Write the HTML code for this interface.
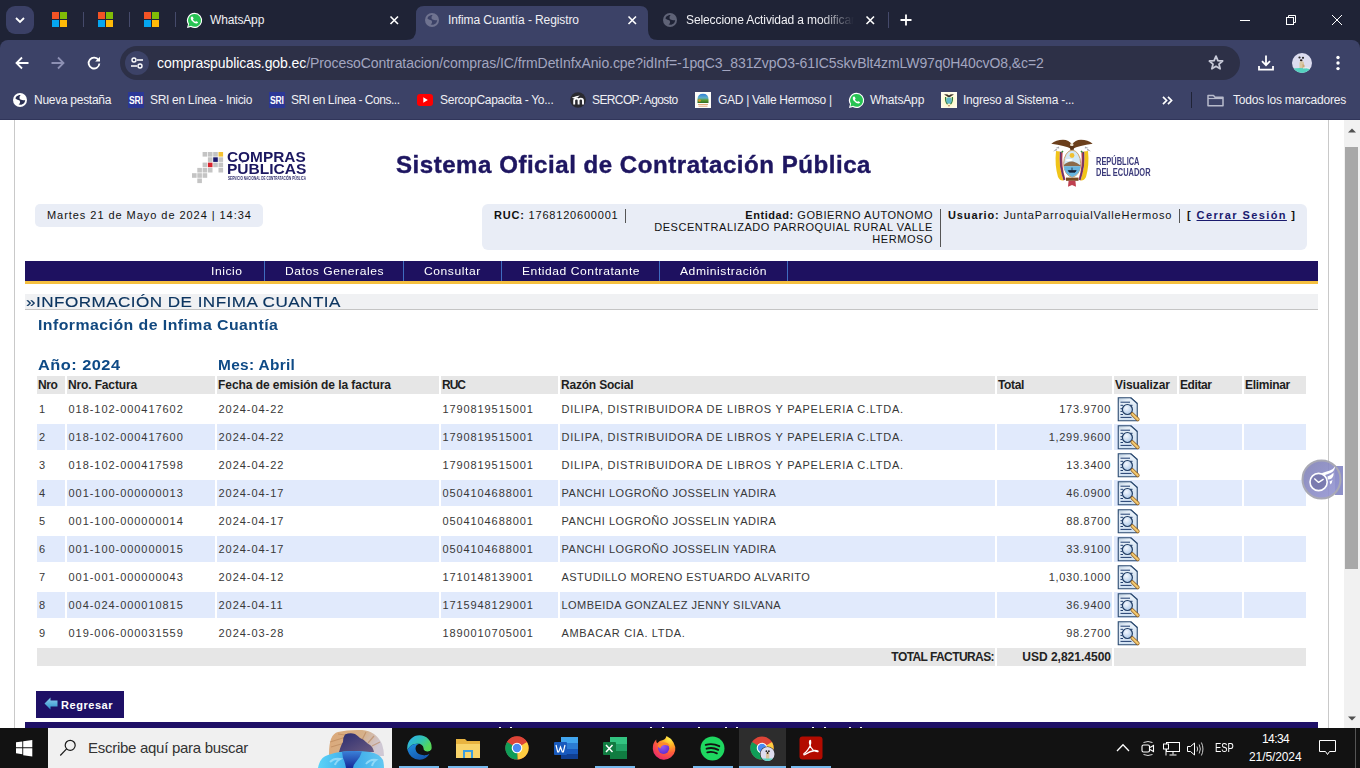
<!DOCTYPE html>
<html><head><meta charset="utf-8">
<style>
*{box-sizing:border-box;margin:0;padding:0}
html,body{width:1360px;height:768px;overflow:hidden;background:#fff;font-family:"Liberation Sans",sans-serif;position:relative}
.a{position:absolute}
.t{position:absolute;white-space:pre;line-height:1}
svg{position:absolute;overflow:visible}
.ctext{font-size:12px;color:#f0f0f4}
.mn{top:265.6px;font-size:11px;color:#fff;letter-spacing:0.5px;transform:scaleX(1.1);transform-origin:0 0}
.th{top:379.4px;font-size:12px;font-weight:bold;color:#1e1e1e}
.td{font-size:11px;color:#383838}
</style></head>
<body>
<svg width="0" height="0" style="position:absolute;left:0;top:0">
<defs>
<linearGradient id="docg" x1="0" y1="0" x2="0.4" y2="1"><stop offset="0" stop-color="#b7cadc"/><stop offset="0.25" stop-color="#e6eff8"/><stop offset="1" stop-color="#d2e2f2"/></linearGradient>
<radialGradient id="lens" cx="0.4" cy="0.35" r="0.7"><stop offset="0" stop-color="#f4f8ff"/><stop offset="1" stop-color="#a9c6e6"/></radialGradient>
<g id="ico">
<path d="M1.25 0.75H13.75L20.25 6.5V23.75H1.25Z" fill="url(#docg)" stroke="#2b4a70" stroke-width="1.1"/>
<path d="M13.75 0.75L20.25 6.5H14.5Z" fill="#e8f1fa"/>
<path d="M13.75 0.75L20.25 6.5" stroke="#2b4a70" stroke-width="1.1"/>
<path d="M3.5 5.2H13M3.5 8.3H6M13 8.3H15.5M3.5 11.7H5.2M3.5 14.4H5.2M3.5 17.5H6M3.5 20.4H14.5" stroke="#1f3c6e" stroke-width="1"/>
<circle cx="10.4" cy="12.5" r="5" fill="url(#lens)" stroke="#233f66" stroke-width="1.2"/>
<path d="M15.3 17L20.8 22.4" stroke="#8a5a20" stroke-width="3.6" stroke-linecap="round"/>
<path d="M15.3 17L20.8 22.4" stroke="#f2c870" stroke-width="2.2" stroke-linecap="round"/>
</g>
</defs>
</svg>
<!-- ===== TAB STRIP ===== -->
<div class="a" style="left:0;top:0;width:1360px;height:52px;background:#1f2336"></div>
<div class="a" style="left:6px;top:6px;width:28px;height:28px;border-radius:9px;background:#3b4066"></div>
<svg style="left:0;top:0" width="40" height="40"><path d="M16 18 L20 22 L24 18" stroke="#fff" stroke-width="1.8" fill="none"/></svg>
<!-- ms logos -->
<svg style="left:52px;top:12px" width="16" height="16"><rect x="0" y="0" width="7" height="7" fill="#f35325"/><rect x="8" y="0" width="7" height="7" fill="#81bc06"/><rect x="0" y="8" width="7" height="7" fill="#05a6f0"/><rect x="8" y="8" width="7" height="7" fill="#ffba08"/></svg>
<svg style="left:98px;top:12px" width="16" height="16"><rect x="0" y="0" width="7" height="7" fill="#f35325"/><rect x="8" y="0" width="7" height="7" fill="#81bc06"/><rect x="0" y="8" width="7" height="7" fill="#05a6f0"/><rect x="8" y="8" width="7" height="7" fill="#ffba08"/></svg>
<svg style="left:144px;top:12px" width="16" height="16"><rect x="0" y="0" width="7" height="7" fill="#f35325"/><rect x="8" y="0" width="7" height="7" fill="#81bc06"/><rect x="0" y="8" width="7" height="7" fill="#05a6f0"/><rect x="8" y="8" width="7" height="7" fill="#ffba08"/></svg>
<div class="a" style="left:83px;top:12px;width:1px;height:15px;background:#454a6b"></div>
<div class="a" style="left:129px;top:12px;width:1px;height:15px;background:#454a6b"></div>
<div class="a" style="left:175px;top:12px;width:1px;height:15px;background:#454a6b"></div>
<!-- whatsapp tab -->
<svg style="left:186px;top:12px" width="17" height="17" viewBox="0 0 17 17"><path d="M8.5 0.8a7.6 7.6 0 0 0-6.5 11.5L1 16l3.8-1a7.6 7.6 0 1 0 3.7-14.2z" fill="#fff"/><path d="M8.5 2a6.4 6.4 0 0 0-5.4 9.8l-0.7 2.6 2.7-0.7A6.4 6.4 0 1 0 8.5 2z" fill="#27c353"/><path d="M5.7 4.5Q6.3 4.2 6.7 4.7L7.5 6.2Q7.7 6.7 7.3 7L6.9 7.4Q7.7 9 9.3 9.8L9.7 9.4Q10 9.1 10.4 9.3L11.8 10Q12.2 10.3 11.9 10.8Q11.3 11.7 10.3 11.6Q7.6 11.2 5.5 8.6Q4.5 7.1 4.8 5.6Q5 5 5.7 4.5Z" fill="#fff"/></svg>
<div class="t ctext" style="left:210px;top:14px;letter-spacing:-0.15px">WhatsApp</div>
<svg style="left:390px;top:16px" width="9" height="9"><path d="M0.5 0.5L8 8M8 0.5L0.5 8" stroke="#fff" stroke-width="1.6"/></svg>
<!-- active tab -->
<svg style="left:406px;top:6px" width="252" height="34" viewBox="0 0 252 34"><path d="M0 34 Q10 34 10 24 L10 8 Q10 0 18 0 L234 0 Q242 0 242 8 L242 24 Q242 34 252 34 Z" fill="#3c4267"/></svg>
<svg style="left:425px;top:13px" width="14" height="14" viewBox="0 0 14 14"><circle cx="7" cy="7" r="7" fill="#6f7390"/><path d="M2.3 5.2Q3 2.6 6.2 1.9L7.6 2.1Q6.2 3.4 6.5 5.2Q6.9 6.4 8.1 6.9L6 7.3Q3.6 6.9 2.3 5.2Z" fill="#3c4267"/><path d="M6.2 7.1L8.2 6.8Q10.6 7.4 12.2 7.3Q11.8 10.8 8.3 11.8L5.6 11.4Q7.3 10.3 7.1 9Q6.9 7.9 6.2 7.1Z" fill="#3c4267"/></svg>
<div class="t ctext" style="left:448px;top:14px;letter-spacing:-0.1px">Infima Cuantía - Registro</div>
<svg style="left:628px;top:16px" width="9" height="9"><path d="M0.5 0.5L8 8M8 0.5L0.5 8" stroke="#fff" stroke-width="1.6"/></svg>
<!-- third tab -->
<svg style="left:663px;top:13px" width="14" height="14" viewBox="0 0 14 14"><circle cx="7" cy="7" r="7" fill="#5f6377"/><path d="M2.3 5.2Q3 2.6 6.2 1.9L7.6 2.1Q6.2 3.4 6.5 5.2Q6.9 6.4 8.1 6.9L6 7.3Q3.6 6.9 2.3 5.2Z" fill="#1f2336"/><path d="M6.2 7.1L8.2 6.8Q10.6 7.4 12.2 7.3Q11.8 10.8 8.3 11.8L5.6 11.4Q7.3 10.3 7.1 9Q6.9 7.9 6.2 7.1Z" fill="#1f2336"/></svg>
<div class="t ctext" style="left:686px;top:14px;letter-spacing:-0.1px;width:168px;overflow:hidden;-webkit-mask-image:linear-gradient(90deg,#000 80%,transparent 100%)">Seleccione Actividad a modificar</div>
<svg style="left:866px;top:16px" width="9" height="9"><path d="M0.5 0.5L8 8M8 0.5L0.5 8" stroke="#fff" stroke-width="1.6"/></svg>
<div class="a" style="left:888px;top:12px;width:1px;height:16px;background:#454a6b"></div>
<svg style="left:900px;top:14px" width="12" height="12"><path d="M6 0.5V11.5M0.5 6H11.5" stroke="#fff" stroke-width="1.8"/></svg>
<!-- window controls -->
<div class="a" style="left:1240px;top:20px;width:10px;height:1px;background:#fff"></div>
<svg style="left:1285px;top:14px" width="12" height="12"><rect x="1.5" y="3.5" width="7" height="7" stroke="#fff" fill="#1f2336" stroke-width="1"/><path d="M3.5 3.5V1.5H10.5V8.5H8.5" stroke="#fff" fill="none" stroke-width="1"/></svg>
<svg style="left:1331px;top:14px" width="12" height="12"><path d="M1 1L11 11M11 1L1 11" stroke="#fff" stroke-width="1"/></svg>

<!-- ===== TOOLBAR ===== -->
<div class="a" style="left:0;top:40px;width:1360px;height:80px;background:#3c4267;border-radius:8px 8px 0 0"></div>
<div class="a" style="left:0;top:119px;width:1360px;height:1px;background:#30355a"></div>
<svg style="left:15px;top:56px" width="14" height="14"><path d="M13.5 7H2M7 1.5L1.5 7L7 12.5" stroke="#fff" stroke-width="1.8" fill="none"/></svg>
<svg style="left:51px;top:56px" width="14" height="14"><path d="M0.5 7H12M7 1.5L12.5 7L7 12.5" stroke="#8d90b3" stroke-width="1.8" fill="none"/></svg>
<svg style="left:87px;top:56px" width="14" height="14"><path d="M11.6 4.2A5.4 5.4 0 1 0 12.4 7.5" stroke="#fff" stroke-width="1.8" fill="none"/><path d="M13 0.8V5.6H8.2Z" fill="#fff"/></svg>
<!-- omnibox -->
<div class="a" style="left:120px;top:46px;width:1120px;height:34px;border-radius:17px;background:#2d3047"></div>
<div class="a" style="left:125px;top:51px;width:24px;height:24px;border-radius:12px;background:#3c4267"></div>
<svg style="left:130px;top:56px" width="14" height="14"><circle cx="4" cy="4" r="2" stroke="#fff" stroke-width="1.4" fill="none"/><path d="M7 4H13M1 10H7" stroke="#fff" stroke-width="1.5"/><circle cx="10" cy="10" r="2" stroke="#fff" stroke-width="1.4" fill="none"/></svg>
<div class="t" style="left:157px;top:56px;font-size:14px;color:#fff;letter-spacing:-0.08px">compraspublicas.gob.ec<span style="color:#a3a6c0">/ProcesoContratacion/compras/IC/frmDetInfxAnio.cpe?idInf=-1pqC3_831ZvpO3-61IC5skvBlt4zmLW97q0H40cvO8,&amp;c=2</span></div>
<svg style="left:1208px;top:55px" width="16" height="16" viewBox="0 0 16 16"><path d="M8 1.2L9.9 5.6L14.6 6L11 9.1L12.1 13.8L8 11.3L3.9 13.8L5 9.1L1.4 6L6.1 5.6Z" stroke="#c7c9d8" stroke-width="1.8" fill="none" stroke-linejoin="round"/></svg>
<svg style="left:1258px;top:55px" width="16" height="16" viewBox="0 0 16 16"><path d="M8 0.5V10M4 6.2L8 10.2L12 6.2" stroke="#fff" stroke-width="1.8" fill="none"/><path d="M1 11V14.6H15V11" stroke="#fff" stroke-width="1.8" fill="none"/></svg>
<svg style="left:1292px;top:53px" width="20" height="20" viewBox="0 0 20 20"><defs><clipPath id="pc"><circle cx="10" cy="10" r="10"/></clipPath></defs><g clip-path="url(#pc)"><rect width="20" height="20" fill="#dcdcef"/><path d="M7.5 16V10Q7.5 8.5 8.8 8.2H10.6Q12 8.5 12 10V16Z" fill="#d8c7a4"/><path d="M10.5 11V16H12.5V12Z" fill="#c9a878"/><circle cx="7.5" cy="4.5" r="1.1" fill="#2a2a2a"/><circle cx="11" cy="4.8" r="1.1" fill="#2a2a2a"/><ellipse cx="9.2" cy="7.3" rx="1.3" ry="1" fill="#2a2018"/><path d="M0 15.5Q10 14.5 20 16V20H0Z" fill="#55d2c0"/><path d="M11 15Q15 14 18 15.5" stroke="#e8f0f0" stroke-width="1" fill="none"/></g></svg>
<svg style="left:1336px;top:55px" width="4" height="16"><circle cx="2" cy="2.5" r="1.7" fill="#fff"/><circle cx="2" cy="8" r="1.7" fill="#fff"/><circle cx="2" cy="13.6" r="1.7" fill="#fff"/></svg>
<!-- ===== BOOKMARKS ===== -->
<svg style="left:13px;top:93px" width="14" height="14" viewBox="0 0 14 14"><circle cx="7" cy="7" r="7" fill="#fff"/><path d="M2.3 5.2Q3 2.6 6.2 1.9L7.6 2.1Q6.2 3.4 6.5 5.2Q6.9 6.4 8.1 6.9L6 7.3Q3.6 6.9 2.3 5.2Z" fill="#2a2f52"/><path d="M6.2 7.1L8.2 6.8Q10.6 7.4 12.2 7.3Q11.8 10.8 8.3 11.8L5.6 11.4Q7.3 10.3 7.1 9Q6.9 7.9 6.2 7.1Z" fill="#2a2f52"/></svg>
<div class="t ctext" style="left:34px;top:94px;letter-spacing:-0.28px">Nueva pestaña</div>
<svg style="left:128px;top:92px" width="16" height="16"><rect width="16" height="16" fill="#2b3796"/><g transform="translate(1,11.6) scale(0.78,1)"><text x="0" y="0" font-family="Liberation Sans" font-weight="bold" font-size="11" fill="#fff" letter-spacing="-0.3">SRI</text></g></svg>
<div class="t ctext" style="left:150px;top:94px;letter-spacing:-0.32px">SRI en Línea - Inicio</div>
<svg style="left:269px;top:92px" width="16" height="16"><rect width="16" height="16" fill="#2b3796"/><g transform="translate(1,11.6) scale(0.78,1)"><text x="0" y="0" font-family="Liberation Sans" font-weight="bold" font-size="11" fill="#fff" letter-spacing="-0.3">SRI</text></g></svg>
<div class="t ctext" style="left:291px;top:94px;letter-spacing:-0.46px">SRI en Línea - Cons...</div>
<svg style="left:417px;top:93px" width="16" height="14"><rect x="0" y="1" width="16" height="12" rx="3" fill="#f00"/><path d="M6.3 4.3V9.7L10.8 7Z" fill="#fff"/></svg>
<div class="t ctext" style="left:440px;top:94px;letter-spacing:-0.27px">SercopCapacita - Yo...</div>
<svg style="left:570px;top:92px" width="16" height="16"><circle cx="8" cy="8" r="7.8" fill="#2a2a30"/><path d="M4.2 12.5V8.6Q4.2 6.6 6.6 6.6Q8.6 6.6 8.6 8.6V12.5M8.6 8.6Q8.6 6.6 10.8 6.6Q13 6.6 13 8.6V12.5" stroke="#fff" stroke-width="1.9" fill="none"/><path d="M1.8 5.8L6 4.2L9.8 3.4L7.6 5.4L4 6.6Z" fill="#fff"/></svg>
<div class="t ctext" style="left:592px;top:94px;letter-spacing:-0.61px">SERCOP: Agosto</div>
<svg style="left:695px;top:92px" width="16" height="16" viewBox="0 0 16 16"><defs><linearGradient id="gd" x1="0" y1="0" x2="0" y2="1"><stop offset="0" stop-color="#2f7fd8"/><stop offset="0.45" stop-color="#5fb0c8"/><stop offset="0.7" stop-color="#5a9a30"/><stop offset="1" stop-color="#2f6a20"/></linearGradient></defs><rect width="16" height="16" fill="#fdfcf8"/><path d="M2.5 11V7.5Q2.5 1.8 8 1.8Q13.5 1.8 13.5 7.5V11Z" fill="url(#gd)"/><circle cx="4.5" cy="8.5" r="1.3" fill="#e0902a"/><path d="M3 12.5H13M3.5 14.2H12.5" stroke="#e0a070" stroke-width="0.9"/></svg>
<div class="t ctext" style="left:718px;top:94px;letter-spacing:-0.3px">GAD | Valle Hermoso |</div>
<svg style="left:848px;top:92px" width="17" height="17" viewBox="0 0 17 17"><path d="M8.5 0.8a7.6 7.6 0 0 0-6.5 11.5L1 16l3.8-1a7.6 7.6 0 1 0 3.7-14.2z" fill="#fff"/><path d="M8.5 2a6.4 6.4 0 0 0-5.4 9.8l-0.7 2.6 2.7-0.7A6.4 6.4 0 1 0 8.5 2z" fill="#27c353"/><path d="M5.7 4.5Q6.3 4.2 6.7 4.7L7.5 6.2Q7.7 6.7 7.3 7L6.9 7.4Q7.7 9 9.3 9.8L9.7 9.4Q10 9.1 10.4 9.3L11.8 10Q12.2 10.3 11.9 10.8Q11.3 11.7 10.3 11.6Q7.6 11.2 5.5 8.6Q4.5 7.1 4.8 5.6Q5 5 5.7 4.5Z" fill="#fff"/></svg>
<div class="t ctext" style="left:870px;top:94px;letter-spacing:-0.15px">WhatsApp</div>
<svg style="left:941px;top:92px" width="16" height="16" viewBox="0 0 16 16"><defs><radialGradient id="ig" cx="0.5" cy="0.55" r="0.6"><stop offset="0" stop-color="#fff6b0"/><stop offset="1" stop-color="#fffdf0"/></radialGradient></defs><rect width="16" height="16" fill="url(#ig)"/><path d="M3 2.5Q6 1.5 8 3.5Q10 1.5 13 2.5Q10.5 3.5 9 5H7Q5.5 3.5 3 2.5Z" fill="#3a3028"/><path d="M4 5Q3.5 10 6 12.5L7 12Q5 9.5 5.2 5Z M12 5Q12.5 10 10 12.5L9 12Q11 9.5 10.8 5Z" fill="#2f7a3a"/><ellipse cx="8" cy="8.5" rx="2.7" ry="3.2" fill="#60b8c8"/><path d="M6.5 12.5Q8 14.5 9.5 12.5L8 14.8Z" fill="#8a4a2a"/></svg>
<div class="t ctext" style="left:963px;top:94px;letter-spacing:-0.24px">Ingreso al Sistema -...</div>
<svg style="left:1162px;top:96px" width="12" height="9"><path d="M1 0.8L4.6 4.5L1 8.2M6 0.8L9.6 4.5L6 8.2" stroke="#fff" stroke-width="1.7" fill="none"/></svg>
<div class="a" style="left:1191px;top:92px;width:1px;height:16px;background:#1f2336"></div>
<svg style="left:1207px;top:94px" width="18" height="13"><path d="M1 1.5H6.5L8 3.2H16V11.8H1Z" stroke="#b7bacb" stroke-width="1.5" fill="none" stroke-linejoin="round"/><path d="M1 4.5H16" stroke="#b7bacb" stroke-width="1.2"/></svg>
<div class="t ctext" style="left:1233px;top:94px;letter-spacing:-0.22px">Todos los marcadores</div>
<!-- ===== PAGE ===== -->
<div class="a" style="left:0;top:120px;width:1344px;height:608px;background:#fff"></div>
<div class="a" style="left:14px;top:120px;width:1px;height:608px;background:#c9c9c9"></div>
<div class="a" style="left:1328px;top:120px;width:1px;height:608px;background:#c9c9c9"></div>
<!-- scrollbar -->
<div class="a" style="left:1344px;top:120px;width:16px;height:608px;background:#f1f1f1"></div>
<svg style="left:1344px;top:124px" width="16" height="12"><path d="M4 8.5L8 4.5L12 8.5Z" fill="#505050"/></svg>
<svg style="left:1344px;top:713px" width="16" height="12"><path d="M4 3.5L8 7.5L12 3.5Z" fill="#505050"/></svg>
<div class="a" style="left:1345px;top:147px;width:13px;height:422px;background:#a8a8a8"></div>

<!-- compras publicas logo -->
<svg style="left:191px;top:151px" width="40" height="34" viewBox="0 0 40 34">
<g fill="#c4c4c4">
<rect x="11.6" y="1" width="4.6" height="4.6"/><rect x="16.9" y="1" width="4.6" height="4.6"/><rect x="22.2" y="1" width="4.6" height="4.6"/>
<rect x="16.9" y="6.3" width="4.6" height="4.6"/><rect x="27.5" y="6.3" width="4.6" height="4.6"/>
<rect x="11.6" y="11.6" width="4.6" height="4.6"/><rect x="22.2" y="11.6" width="4.6" height="4.6"/><rect x="27.5" y="11.6" width="4.6" height="4.6"/>
<rect x="6.3" y="16.9" width="4.6" height="4.6"/><rect x="11.6" y="16.9" width="4.6" height="4.6"/><rect x="16.9" y="16.9" width="4.6" height="4.6"/><rect x="27.5" y="16.9" width="4.6" height="4.6"/>
<rect x="1" y="22.2" width="4.6" height="4.6"/><rect x="6.3" y="22.2" width="4.6" height="4.6"/><rect x="11.6" y="22.2" width="4.6" height="4.6"/>
<rect x="6.3" y="27.5" width="4.6" height="4.6"/>
</g>
<rect x="27.5" y="1" width="4.6" height="4.6" fill="#f5c232"/>
<rect x="22.2" y="6.3" width="4.6" height="4.6" fill="#1b1a6e"/>
<rect x="16.9" y="11.6" width="4.6" height="4.6" fill="#d7242e"/>
</svg>
<div class="t" style="left:227px;top:149.5px;font-size:14px;font-weight:bold;color:#1b1760;transform:scaleX(1.1);transform-origin:0 0">COMPRAS</div>
<div class="t" style="left:227px;top:162px;font-size:14px;font-weight:bold;color:#1b1760;transform:scaleX(1.11);transform-origin:0 0">PÚBLICAS</div>
<div class="t" style="left:228px;top:176.6px;font-size:4.6px;font-weight:bold;color:#2d2b6a;transform:scaleX(0.67);transform-origin:0 0;letter-spacing:0.05px">SERVICIO NACIONAL DE CONTRATACIÓN PÚBLICA</div>

<!-- title -->
<div class="t" style="left:396px;top:154px;font-size:23px;font-weight:bold;color:#1e1661;-webkit-text-stroke:0.4px #1e1661;letter-spacing:0.5px;transform:scaleX(1.046);transform-origin:0 0">Sistema Oficial de Contratación Pública</div>

<!-- ecuador logo -->
<svg style="left:1046px;top:134px" width="52" height="56" viewBox="0 0 52 56">
<path d="M5.3 9.8Q10 5.8 17 5.8Q23 6 26 10.5L25.5 15Q19 11.5 5.3 9.8Z" fill="#6b3f1c"/>
<path d="M46.7 9.8Q42 5.8 35 5.8Q29 6 26 10.5L26.5 15Q33 11.5 46.7 9.8Z" fill="#6b3f1c"/>
<circle cx="25.8" cy="10.8" r="1.7" fill="#e8e0d0"/>
<path d="M23.8 12L28.2 12L27.5 17L24.5 17Z" fill="#5a3418"/>
<path d="M7 17.5L10.5 14.5L11.2 16.2Z M9.5 14L13 12.5L13.2 14.5Z M45 17.5L41.5 14.5L40.8 16.2Z M42.5 14L39 12.5L38.8 14.5Z" fill="#a8a8b0"/>
<path d="M10 17Q8.5 31 12 43Q14 47 17.5 46.5Q12.5 33 13.8 17.5Z" fill="#f0c419"/>
<path d="M42 17Q43.5 31 40 43Q38 47 34.5 46.5Q39.5 33 38.2 17.5Z" fill="#f0c419"/>
<path d="M13.8 17.5Q12.5 33 17.5 46.5L19.5 45.5Q15.2 32.5 16.6 18.5Z" fill="#b83848"/>
<path d="M38.2 17.5Q39.5 33 34.5 46.5L32.5 45.5Q36.8 32.5 35.4 18.5Z" fill="#b83848"/>
<path d="M14.6 18Q13.6 32 18.2 46" stroke="#2a3a8a" stroke-width="0.8" fill="none"/>
<path d="M37.4 18Q38.4 32 33.8 46" stroke="#2a3a8a" stroke-width="0.8" fill="none"/>
<path d="M15.5 18.5L17 17M36.5 18.5L35 17" stroke="#3a8a3a" stroke-width="1.5"/>
<ellipse cx="26.2" cy="29.6" rx="8.5" ry="13.4" fill="#d2e8f6" stroke="#c9a06b" stroke-width="1"/>
<circle cx="26" cy="21.5" r="2.4" fill="#f0c030"/>
<ellipse cx="23" cy="26" rx="3.5" ry="1.1" fill="#fff"/>
<path d="M17.9 31Q22 26.8 27 27.6Q31 28.5 34.6 31.5V32.2H17.9Z" fill="#8b6a4a"/>
<path d="M17.9 32.2H34.6Q34 40 26.2 43Q18.4 40 17.9 32.2Z" fill="#68b4de"/>
<path d="M22.2 36.6H30.2L29 38.2H23.4Z M26 33.6V36.6" fill="#1a2438" stroke="#1a2438" stroke-width="0.8"/>
<rect x="20" y="43.6" width="12.5" height="3.2" fill="#7a4a20"/>
<path d="M22.6 46.8L22 52.8L26 51L30 52.8L29.4 46.8Z" fill="#c04050"/>
</svg>
<div class="t" style="left:1096px;top:156px;font-size:10.5px;font-weight:bold;color:#3c3b7b;transform:scaleX(0.71);transform-origin:0 0;letter-spacing:0px">REPÚBLICA</div>
<div class="t" style="left:1096px;top:166.7px;font-size:10.5px;font-weight:bold;color:#3c3b7b;transform:scaleX(0.71);transform-origin:0 0">DEL ECUADOR</div>

<!-- date box -->
<div class="a" style="left:35px;top:204px;width:228px;height:23px;border-radius:5px;background:#e9edf6"></div>
<div class="t" style="left:47px;top:210px;font-size:11px;color:#111;letter-spacing:0.95px">Martes 21 de Mayo de 2024 | 14:34</div>

<!-- ruc box -->
<div class="a" style="left:482px;top:204px;width:825px;height:46px;border-radius:6px;background:#e9edf6"></div>
<div class="t" style="left:494px;top:210px;font-size:11px;color:#111;letter-spacing:0.8px"><b>RUC:</b> 1768120600001</div>
<div class="a" style="left:625px;top:209px;width:1px;height:14px;background:#555"></div>
<div class="t" style="left:601px;width:332px;top:209px;font-size:11px;color:#111;letter-spacing:0.55px;text-align:right;line-height:12px;white-space:normal"><b>Entidad:</b> GOBIERNO AUTONOMO<br>DESCENTRALIZADO PARROQUIAL RURAL VALLE<br>HERMOSO</div>
<div class="a" style="left:940px;top:209px;width:1px;height:38px;background:#555"></div>
<div class="t" style="left:948px;top:210px;font-size:11px;color:#111;letter-spacing:0.87px"><b>Usuario:</b> JuntaParroquialValleHermoso</div>
<div class="a" style="left:1179px;top:209px;width:1px;height:14px;background:#555"></div>
<div class="t" style="left:1187px;top:210px;font-size:11px;color:#111;letter-spacing:1.4px"><b>[ </b><b style="color:#1a1a6e;text-decoration:underline">Cerrar Sesión</b><b> ]</b></div>

<!-- menu -->
<div class="a" style="left:25px;top:261px;width:1293px;height:20px;background:#1e1160"></div>
<div class="a" style="left:25px;top:281px;width:1293px;height:3px;background:#f5c040"></div>
<div class="a" style="left:264px;top:261px;width:1px;height:20px;background:#3f6cc0"></div>
<div class="a" style="left:403px;top:261px;width:1px;height:20px;background:#3f6cc0"></div>
<div class="a" style="left:501px;top:261px;width:1px;height:20px;background:#3f6cc0"></div>
<div class="a" style="left:659px;top:261px;width:1px;height:20px;background:#3f6cc0"></div>
<div class="a" style="left:787px;top:261px;width:1px;height:20px;background:#3f6cc0"></div>
<div class="t mn" style="left:211px">Inicio</div>
<div class="t mn" style="left:285px">Datos Generales</div>
<div class="t mn" style="left:424px">Consultar</div>
<div class="t mn" style="left:522px">Entidad Contratante</div>
<div class="t mn" style="left:680px">Administración</div>

<!-- section header -->
<div class="a" style="left:25px;top:294px;width:1293px;height:16px;background:#f0f1f3;border-bottom:1px solid #c4c4c4"></div>
<div class="t" style="left:26px;top:294px;font-size:15px;color:#0c3560;-webkit-text-stroke:0.15px #0c3560;letter-spacing:0.4px;transform:scaleX(1.14);transform-origin:0 0">»INFORMACIÓN DE INFIMA CUANTIA</div>
<div class="t" style="left:38px;top:317.8px;font-size:14px;font-weight:bold;color:#11487f;letter-spacing:0.4px;transform:scaleX(1.132);transform-origin:0 0">Información de Infima Cuantía</div>
<div class="t" style="left:38px;top:358px;font-size:14px;font-weight:bold;color:#0e4a86;letter-spacing:0.4px;transform:scaleX(1.17);transform-origin:0 0">Año: 2024</div>
<div class="t" style="left:218px;top:358px;font-size:14px;font-weight:bold;color:#0e4a86;letter-spacing:0.3px;transform:scaleX(1.1);transform-origin:0 0">Mes: Abril</div>
<!-- ===== TABLE ===== -->
<div class="a" style="left:37px;top:376px;width:28px;height:18px;background:#e6e6e6"></div>
<div class="t th" style="left:38px;letter-spacing:-0.39px">Nro</div>
<div class="a" style="left:67px;top:376px;width:148px;height:18px;background:#e6e6e6"></div>
<div class="t th" style="left:68px;letter-spacing:-0.14px">Nro. Factura</div>
<div class="a" style="left:217px;top:376px;width:222px;height:18px;background:#e6e6e6"></div>
<div class="t th" style="left:218px;letter-spacing:-0.06px">Fecha de emisión de la factura</div>
<div class="a" style="left:441px;top:376px;width:117px;height:18px;background:#e6e6e6"></div>
<div class="t th" style="left:442px;letter-spacing:-1.0px">RUC</div>
<div class="a" style="left:560px;top:376px;width:435px;height:18px;background:#e6e6e6"></div>
<div class="t th" style="left:561px;letter-spacing:-0.2px">Razón Social</div>
<div class="a" style="left:997px;top:376px;width:115px;height:18px;background:#e6e6e6"></div>
<div class="t th" style="left:998px;letter-spacing:-0.36px">Total</div>
<div class="a" style="left:1114px;top:376px;width:63px;height:18px;background:#e6e6e6"></div>
<div class="t th" style="left:1115px;letter-spacing:-0.1px">Visualizar</div>
<div class="a" style="left:1179px;top:376px;width:63px;height:18px;background:#e6e6e6"></div>
<div class="t th" style="left:1180px;letter-spacing:-0.42px">Editar</div>
<div class="a" style="left:1244px;top:376px;width:62px;height:18px;background:#e6e6e6"></div>
<div class="t th" style="left:1245px;letter-spacing:-0.3px">Eliminar</div>
<div class="t td" style="left:39px;top:403.5px">1</div>
<div class="t td" style="left:68.5px;top:403.5px;letter-spacing:0.95px">018-102-000417602</div>
<div class="t td" style="left:218.5px;top:403.5px;letter-spacing:0.95px">2024-04-22</div>
<div class="t td" style="left:442.5px;top:403.5px;letter-spacing:0.9px">1790819515001</div>
<div class="t td" style="left:561.5px;top:403.5px;letter-spacing:0.74px">DILIPA, DISTRIBUIDORA DE LIBROS Y PAPELERIA C.LTDA.</div>
<div class="t td" style="left:900px;width:211px;text-align:right;top:403.5px;letter-spacing:0.73px">173.9700</div>
<svg style="left:1117px;top:397px" width="23" height="25"><use href="#ico"/></svg>
<div class="a" style="left:37px;top:424px;width:28px;height:26px;background:#e1eafc"></div>
<div class="a" style="left:67px;top:424px;width:148px;height:26px;background:#e1eafc"></div>
<div class="a" style="left:217px;top:424px;width:222px;height:26px;background:#e1eafc"></div>
<div class="a" style="left:441px;top:424px;width:117px;height:26px;background:#e1eafc"></div>
<div class="a" style="left:560px;top:424px;width:435px;height:26px;background:#e1eafc"></div>
<div class="a" style="left:997px;top:424px;width:115px;height:26px;background:#e1eafc"></div>
<div class="a" style="left:1114px;top:424px;width:63px;height:26px;background:#e1eafc"></div>
<div class="a" style="left:1179px;top:424px;width:63px;height:26px;background:#e1eafc"></div>
<div class="a" style="left:1244px;top:424px;width:62px;height:26px;background:#e1eafc"></div>
<div class="t td" style="left:39px;top:431.5px">2</div>
<div class="t td" style="left:68.5px;top:431.5px;letter-spacing:0.95px">018-102-000417600</div>
<div class="t td" style="left:218.5px;top:431.5px;letter-spacing:0.95px">2024-04-22</div>
<div class="t td" style="left:442.5px;top:431.5px;letter-spacing:0.9px">1790819515001</div>
<div class="t td" style="left:561.5px;top:431.5px;letter-spacing:0.74px">DILIPA, DISTRIBUIDORA DE LIBROS Y PAPELERIA C.LTDA.</div>
<div class="t td" style="left:900px;width:211px;text-align:right;top:431.5px;letter-spacing:0.73px">1,299.9600</div>
<svg style="left:1117px;top:425px" width="23" height="25"><use href="#ico"/></svg>
<div class="t td" style="left:39px;top:459.5px">3</div>
<div class="t td" style="left:68.5px;top:459.5px;letter-spacing:0.95px">018-102-000417598</div>
<div class="t td" style="left:218.5px;top:459.5px;letter-spacing:0.95px">2024-04-22</div>
<div class="t td" style="left:442.5px;top:459.5px;letter-spacing:0.9px">1790819515001</div>
<div class="t td" style="left:561.5px;top:459.5px;letter-spacing:0.74px">DILIPA, DISTRIBUIDORA DE LIBROS Y PAPELERIA C.LTDA.</div>
<div class="t td" style="left:900px;width:211px;text-align:right;top:459.5px;letter-spacing:0.73px">13.3400</div>
<svg style="left:1117px;top:453px" width="23" height="25"><use href="#ico"/></svg>
<div class="a" style="left:37px;top:480px;width:28px;height:26px;background:#e1eafc"></div>
<div class="a" style="left:67px;top:480px;width:148px;height:26px;background:#e1eafc"></div>
<div class="a" style="left:217px;top:480px;width:222px;height:26px;background:#e1eafc"></div>
<div class="a" style="left:441px;top:480px;width:117px;height:26px;background:#e1eafc"></div>
<div class="a" style="left:560px;top:480px;width:435px;height:26px;background:#e1eafc"></div>
<div class="a" style="left:997px;top:480px;width:115px;height:26px;background:#e1eafc"></div>
<div class="a" style="left:1114px;top:480px;width:63px;height:26px;background:#e1eafc"></div>
<div class="a" style="left:1179px;top:480px;width:63px;height:26px;background:#e1eafc"></div>
<div class="a" style="left:1244px;top:480px;width:62px;height:26px;background:#e1eafc"></div>
<div class="t td" style="left:39px;top:487.5px">4</div>
<div class="t td" style="left:68.5px;top:487.5px;letter-spacing:0.95px">001-100-000000013</div>
<div class="t td" style="left:218.5px;top:487.5px;letter-spacing:0.95px">2024-04-17</div>
<div class="t td" style="left:442.5px;top:487.5px;letter-spacing:0.9px">0504104688001</div>
<div class="t td" style="left:561.5px;top:487.5px;letter-spacing:0.52px">PANCHI LOGROÑO JOSSELIN YADIRA</div>
<div class="t td" style="left:900px;width:211px;text-align:right;top:487.5px;letter-spacing:0.73px">46.0900</div>
<svg style="left:1117px;top:481px" width="23" height="25"><use href="#ico"/></svg>
<div class="t td" style="left:39px;top:515.5px">5</div>
<div class="t td" style="left:68.5px;top:515.5px;letter-spacing:0.95px">001-100-000000014</div>
<div class="t td" style="left:218.5px;top:515.5px;letter-spacing:0.95px">2024-04-17</div>
<div class="t td" style="left:442.5px;top:515.5px;letter-spacing:0.9px">0504104688001</div>
<div class="t td" style="left:561.5px;top:515.5px;letter-spacing:0.52px">PANCHI LOGROÑO JOSSELIN YADIRA</div>
<div class="t td" style="left:900px;width:211px;text-align:right;top:515.5px;letter-spacing:0.73px">88.8700</div>
<svg style="left:1117px;top:509px" width="23" height="25"><use href="#ico"/></svg>
<div class="a" style="left:37px;top:536px;width:28px;height:26px;background:#e1eafc"></div>
<div class="a" style="left:67px;top:536px;width:148px;height:26px;background:#e1eafc"></div>
<div class="a" style="left:217px;top:536px;width:222px;height:26px;background:#e1eafc"></div>
<div class="a" style="left:441px;top:536px;width:117px;height:26px;background:#e1eafc"></div>
<div class="a" style="left:560px;top:536px;width:435px;height:26px;background:#e1eafc"></div>
<div class="a" style="left:997px;top:536px;width:115px;height:26px;background:#e1eafc"></div>
<div class="a" style="left:1114px;top:536px;width:63px;height:26px;background:#e1eafc"></div>
<div class="a" style="left:1179px;top:536px;width:63px;height:26px;background:#e1eafc"></div>
<div class="a" style="left:1244px;top:536px;width:62px;height:26px;background:#e1eafc"></div>
<div class="t td" style="left:39px;top:543.5px">6</div>
<div class="t td" style="left:68.5px;top:543.5px;letter-spacing:0.95px">001-100-000000015</div>
<div class="t td" style="left:218.5px;top:543.5px;letter-spacing:0.95px">2024-04-17</div>
<div class="t td" style="left:442.5px;top:543.5px;letter-spacing:0.9px">0504104688001</div>
<div class="t td" style="left:561.5px;top:543.5px;letter-spacing:0.52px">PANCHI LOGROÑO JOSSELIN YADIRA</div>
<div class="t td" style="left:900px;width:211px;text-align:right;top:543.5px;letter-spacing:0.73px">33.9100</div>
<svg style="left:1117px;top:537px" width="23" height="25"><use href="#ico"/></svg>
<div class="t td" style="left:39px;top:571.5px">7</div>
<div class="t td" style="left:68.5px;top:571.5px;letter-spacing:0.95px">001-001-000000043</div>
<div class="t td" style="left:218.5px;top:571.5px;letter-spacing:0.95px">2024-04-12</div>
<div class="t td" style="left:442.5px;top:571.5px;letter-spacing:0.9px">1710148139001</div>
<div class="t td" style="left:561.5px;top:571.5px;letter-spacing:0.47px">ASTUDILLO MORENO ESTUARDO ALVARITO</div>
<div class="t td" style="left:900px;width:211px;text-align:right;top:571.5px;letter-spacing:0.73px">1,030.1000</div>
<svg style="left:1117px;top:565px" width="23" height="25"><use href="#ico"/></svg>
<div class="a" style="left:37px;top:592px;width:28px;height:26px;background:#e1eafc"></div>
<div class="a" style="left:67px;top:592px;width:148px;height:26px;background:#e1eafc"></div>
<div class="a" style="left:217px;top:592px;width:222px;height:26px;background:#e1eafc"></div>
<div class="a" style="left:441px;top:592px;width:117px;height:26px;background:#e1eafc"></div>
<div class="a" style="left:560px;top:592px;width:435px;height:26px;background:#e1eafc"></div>
<div class="a" style="left:997px;top:592px;width:115px;height:26px;background:#e1eafc"></div>
<div class="a" style="left:1114px;top:592px;width:63px;height:26px;background:#e1eafc"></div>
<div class="a" style="left:1179px;top:592px;width:63px;height:26px;background:#e1eafc"></div>
<div class="a" style="left:1244px;top:592px;width:62px;height:26px;background:#e1eafc"></div>
<div class="t td" style="left:39px;top:599.5px">8</div>
<div class="t td" style="left:68.5px;top:599.5px;letter-spacing:0.95px">004-024-000010815</div>
<div class="t td" style="left:218.5px;top:599.5px;letter-spacing:0.95px">2024-04-11</div>
<div class="t td" style="left:442.5px;top:599.5px;letter-spacing:0.9px">1715948129001</div>
<div class="t td" style="left:561.5px;top:599.5px;letter-spacing:0.46px">LOMBEIDA GONZALEZ JENNY SILVANA</div>
<div class="t td" style="left:900px;width:211px;text-align:right;top:599.5px;letter-spacing:0.73px">36.9400</div>
<svg style="left:1117px;top:593px" width="23" height="25"><use href="#ico"/></svg>
<div class="t td" style="left:39px;top:627.5px">9</div>
<div class="t td" style="left:68.5px;top:627.5px;letter-spacing:0.95px">019-006-000031559</div>
<div class="t td" style="left:218.5px;top:627.5px;letter-spacing:0.95px">2024-03-28</div>
<div class="t td" style="left:442.5px;top:627.5px;letter-spacing:0.9px">1890010705001</div>
<div class="t td" style="left:561.5px;top:627.5px;letter-spacing:0.65px">AMBACAR CIA. LTDA.</div>
<div class="t td" style="left:900px;width:211px;text-align:right;top:627.5px;letter-spacing:0.73px">98.2700</div>
<svg style="left:1117px;top:621px" width="23" height="25"><use href="#ico"/></svg>
<div class="a" style="left:37px;top:648px;width:958px;height:18px;background:#e6e6e6"></div>
<div class="a" style="left:997px;top:648px;width:115px;height:18px;background:#e6e6e6"></div>
<div class="a" style="left:1114px;top:648px;width:192px;height:18px;background:#e6e6e6"></div>
<div class="t th" style="left:700px;width:294px;text-align:right;top:650.6px;color:#222;letter-spacing:-0.58px">TOTAL FACTURAS:</div>
<div class="t th" style="left:900px;width:211px;text-align:right;top:650.6px;color:#222;letter-spacing:0px">USD 2,821.4500</div>
<!-- regresar -->
<div class="a" style="left:36px;top:691px;width:88px;height:27px;background:#1e1066"></div>
<svg style="left:44px;top:697px" width="14" height="13" viewBox="0 0 14 13"><defs><linearGradient id="ag" x1="0" x2="0" y1="0" y2="1"><stop offset="0" stop-color="#8fd0f0"/><stop offset="1" stop-color="#2a8fc8"/></linearGradient></defs><path d="M0.5 6.5L6.5 0.5V3.5H13.5V9.5H6.5V12.5Z" fill="url(#ag)"/></svg>
<div class="t" style="left:61px;top:699.7px;font-size:11px;font-weight:bold;color:#fff;letter-spacing:0.54px">Regresar</div>
<!-- footer navy -->
<div class="a" style="left:25px;top:722px;width:1293px;height:6px;background:#1e1066"></div>
<div class="a" style="left:499px;top:726.5px;width:1.5px;height:1.5px;background:#fff"></div><div class="a" style="left:510px;top:726.5px;width:1.5px;height:1.5px;background:#fff"></div><div class="a" style="left:650px;top:726.5px;width:1.5px;height:1.5px;background:#fff"></div><div class="a" style="left:662px;top:726.5px;width:1.5px;height:1.5px;background:#fff"></div><div class="a" style="left:698px;top:726.5px;width:1.5px;height:1.5px;background:#fff"></div><div class="a" style="left:725px;top:726.5px;width:1.5px;height:1.5px;background:#fff"></div><div class="a" style="left:736px;top:726.5px;width:1.5px;height:1.5px;background:#fff"></div><div class="a" style="left:812px;top:726.5px;width:1.5px;height:1.5px;background:#fff"></div><div class="a" style="left:824px;top:726.5px;width:1.5px;height:1.5px;background:#fff"></div><div class="a" style="left:849px;top:726.5px;width:1.5px;height:1.5px;background:#fff"></div><div class="a" style="left:860px;top:726.5px;width:1.5px;height:1.5px;background:#fff"></div>
<!-- floating widget -->
<div class="a" style="left:1335px;top:466px;width:8px;height:29px;background:#8e90c8"></div>
<svg style="left:1300px;top:458px" width="44" height="44" viewBox="0 0 44 44"><defs><linearGradient id="wg" x1="0" y1="0" x2="1" y2="1"><stop offset="0" stop-color="#7f80b4"/><stop offset="1" stop-color="#9697d6"/></linearGradient></defs>
<circle cx="21.5" cy="21.5" r="19" fill="url(#wg)" fill-opacity="0.9" stroke="#a9a9b4" stroke-width="2"/>
<circle cx="18.6" cy="24" r="8.6" fill="#7b7bb0" stroke="#fff" stroke-width="1.6"/>
<path d="M14.3 20.5L18.6 24.4L23.6 21.2" stroke="#fff" stroke-width="1.4" fill="none" stroke-linejoin="round"/>
<path d="M21.5 15.3Q26 13.8 30 12.5Q33.5 11 35 8.5Q34.8 12.5 31.5 14.6Q28 16.4 24.5 17.2Z" fill="#fff"/>
<path d="M27.5 18.5Q31 17.5 33.5 14.8Q34 18.5 31.5 20.5Q29.5 21.5 27.8 21.4Z" fill="#fff"/>
<path d="M29.5 23.5Q31.5 23 32.5 21.8Q32.2 25 30.5 26.6Z" fill="#fff"/>
</svg>
<!-- ===== TASKBAR ===== -->
<div class="a" style="left:0;top:728px;width:1360px;height:40px;background:#121212"></div>
<svg style="left:16px;top:740px" width="17" height="17"><path d="M0 2.3L6.3 1.4V7.3H0Z M7.2 1.3L16.3 0V7.3H7.2Z M0 8.2H6.3V14.2L0 13.3Z M7.2 8.2H16.3V16.5L7.2 15.2Z" fill="#fff"/></svg>
<div class="a" style="left:48px;top:728px;width:344px;height:40px;background:#f0f0f0"></div>
<svg style="left:58px;top:740px" width="20" height="18"><circle cx="12.2" cy="5.3" r="5" stroke="#1a1a1a" stroke-width="1.2" fill="none"/><path d="M8.6 8.9L2.3 15.5" stroke="#1a1a1a" stroke-width="1.2"/></svg>
<div class="t" style="left:88px;top:739.5px;font-size:15px;color:#333;letter-spacing:-0.28px">Escribe aquí para buscar</div>
<svg style="left:318px;top:728px" width="70" height="40" viewBox="0 0 70 40"><defs>
<linearGradient id="sand" x1="0" y1="0" x2="1" y2="0.3"><stop offset="0" stop-color="#dca878"/><stop offset="0.6" stop-color="#d6b088"/><stop offset="1" stop-color="#cfc8d4"/></linearGradient>
<linearGradient id="sil" x1="0" y1="0" x2="1" y2="1"><stop offset="0" stop-color="#2a2c70"/><stop offset="1" stop-color="#6a5a80"/></linearGradient>
<linearGradient id="wv" x1="0" y1="0" x2="1" y2="0"><stop offset="0" stop-color="#5cd4f8"/><stop offset="0.5" stop-color="#3aa8e8"/><stop offset="1" stop-color="#62c8f2"/></linearGradient>
<linearGradient id="wvd" x1="0" y1="0" x2="0" y2="1"><stop offset="0" stop-color="#3a80d8"/><stop offset="1" stop-color="#152a98"/></linearGradient></defs>
<path d="M11 26Q11 6 20 4Q30 1.5 44 2Q58 3 64 16Q66 22 66 28H11Z" fill="url(#sand)"/>
<path d="M12 14L28 9M13 19L30 14M20 6L34 8M48 4L44 12M56 8L50 15M62 14L54 18" stroke="#b88458" stroke-width="1.2" opacity="0.6"/>
<path d="M21 24Q23 17 25 14Q25 9 27 6.5Q32 4.5 37 6Q40 8 42 10Q46 11.5 48 14Q50 16 52 17Q55 19 56 24Z" fill="url(#sil)"/>
<path d="M0 40Q2 29 10 27Q17 24 26 23.5Q40 22.5 52 24Q62 26 65 32Q66 36 66 40Z" fill="url(#wv)"/>
<path d="M24 24Q34 22.5 44 23.5Q42 30 38 34Q35 37 35 40H28Q27 34 25 30Z" fill="url(#wvd)"/>
<path d="M12 34Q16 30 22 31Q18 33 17 37M48 36Q52 31 58 32Q55 34 54 38" stroke="#9fe0fa" stroke-width="2" fill="none" opacity="0.8"/>
</svg>
<!-- pinned apps -->
<svg style="left:407px;top:735px" width="25" height="25" viewBox="0 0 24 24"><defs><linearGradient id="eg1" x1="0.1" y1="0.1" x2="0.9" y2="0.6"><stop offset="0" stop-color="#2fb0e8"/><stop offset="0.55" stop-color="#31c3b0"/><stop offset="1" stop-color="#54d65a"/></linearGradient><linearGradient id="eg2" x1="0" y1="0" x2="0.6" y2="1"><stop offset="0" stop-color="#1f8fe0"/><stop offset="1" stop-color="#1458b0"/></linearGradient></defs>
<path d="M12 0.3A11.7 11.7 0 0 1 23.7 12.5Q23.5 15.5 20 16Q16 16 15.5 13Q15.5 9.5 12 8.5Q6 7.5 2.5 11.5Q1 13 0.4 14.5Q0.1 13 0.3 11.5A11.7 11.7 0 0 1 12 0.3Z" fill="url(#eg1)"/>
<path d="M0.4 14.5Q1 13 2.5 11.5Q6 7.5 12 8.5Q8 9.5 8.2 13.5Q8.6 17.8 13.5 19Q18 20 21.5 18Q19 23.5 12 23.7Q3 23.5 0.4 14.5Z" fill="url(#eg2)"/>
<ellipse cx="12.2" cy="13" rx="3.6" ry="3.4" fill="#121212"/>
<path d="M15.5 13Q16 16 20 16Q23.5 15.5 23.7 12.5Q23.8 15 22.5 17.5Q21.8 18 21.5 18Q18 20 14.5 19Q16.5 17.5 15.5 13Z" fill="#121212"/>
</svg>
<svg style="left:455px;top:736px" width="26" height="24" viewBox="0 0 26 24"><path d="M1 3H10L12 5H25V22H1Z" fill="#e8b440"/><path d="M1 8H25V22H1Z" fill="#f8d46a"/><path d="M8 14H18V22H8Z" fill="#3a9ee0"/><path d="M10 16H16V22H10Z" fill="#f8d46a"/></svg>
<svg style="left:505px;top:736px" width="24" height="24" viewBox="0 0 24 24"><circle cx="12" cy="12" r="11.5" fill="#dd4437"/><path d="M12 12L2 6A11.5 11.5 0 0 1 22 6Z" fill="#dd4437"/><path d="M12 12L22 6A11.5 11.5 0 0 1 12.5 23.5Z" fill="#ffcd40"/><path d="M12 12L12.5 23.5A11.5 11.5 0 0 1 2 6Z" fill="#109d58"/><circle cx="12" cy="12" r="5.3" fill="#fff"/><circle cx="12" cy="12" r="4.2" fill="#4a8af4"/></svg>
<svg style="left:553px;top:736px" width="26" height="24" viewBox="0 0 26 24"><rect x="8" y="1" width="17" height="22" rx="1.5" fill="#2b7cd3"/><rect x="8" y="1" width="17" height="6" fill="#41a5ee"/><rect x="8" y="13" width="17" height="5" fill="#185abd"/><rect x="8" y="18" width="17" height="5" fill="#103f91"/><rect x="1" y="6" width="13" height="13" rx="1" fill="#185abd"/><path d="M3 9L4.7 16H5.7L7.5 11L9.3 16H10.3L12 9" stroke="#fff" stroke-width="1.2" fill="none"/></svg>
<svg style="left:602px;top:736px" width="26" height="24" viewBox="0 0 26 24"><rect x="8" y="1" width="17" height="22" rx="1.5" fill="#21a366"/><rect x="8" y="1" width="17" height="7" fill="#33c481"/><rect x="8" y="15" width="17" height="8" fill="#107c41"/><rect x="1" y="6" width="13" height="13" rx="1" fill="#107c41"/><path d="M4 9L10.5 16M10.5 9L4 16" stroke="#fff" stroke-width="1.5"/></svg>
<svg style="left:651px;top:735px" width="26" height="26" viewBox="0 0 26 26"><defs><radialGradient id="ff" cx="0.75" cy="0.1" r="1"><stop offset="0" stop-color="#fff44f"/><stop offset="0.3" stop-color="#ffb325"/><stop offset="0.6" stop-color="#ff6139"/><stop offset="1" stop-color="#e8256f"/></radialGradient><radialGradient id="fp" cx="0.4" cy="0.3" r="0.8"><stop offset="0" stop-color="#9a5cf0"/><stop offset="1" stop-color="#5a2ad0"/></radialGradient></defs>
<path d="M1.8 14Q1.6 8 5.2 4.5Q5 7 6.2 8.2Q8.5 5.5 12 5Q14.5 4.5 15.5 1Q20 3 22.5 7.5Q24.8 11.5 24.2 15.5A11.3 11.3 0 0 1 1.8 14Z" fill="url(#ff)"/>
<circle cx="12.6" cy="13.3" r="5.6" fill="url(#fp)"/>
<path d="M6.5 11Q9 6.8 14.5 7.6Q18.5 8.5 18.8 12Q16.5 9.5 13 10Q10 10.5 9.5 13.5Q8 12.5 6.5 11Z" fill="#ff8a2a"/>
</svg>
<svg style="left:700px;top:736px" width="25" height="25" viewBox="0 0 24 24"><circle cx="12" cy="12" r="11.5" fill="#1ed760"/><path d="M5.5 8.5Q12 6.5 18.5 9.8M6.3 12.2Q12 10.5 17.5 13.3M7 15.7Q11.5 14.4 16.2 16.6" stroke="#121212" stroke-width="1.8" fill="none" stroke-linecap="round"/></svg>
<div class="a" style="left:739px;top:728px;width:47px;height:40px;background:#2d2d2d"></div>
<svg style="left:750px;top:736px" width="24" height="24" viewBox="0 0 24 24"><circle cx="12" cy="12" r="11.5" fill="#dd4437"/><path d="M12 12L22 6A11.5 11.5 0 0 1 12.5 23.5Z" fill="#ffcd40"/><path d="M12 12L12.5 23.5A11.5 11.5 0 0 1 2 6Z" fill="#109d58"/><circle cx="12" cy="12" r="5.3" fill="#fff"/><circle cx="12" cy="12" r="4.2" fill="#4a8af4"/><defs><clipPath id="av2"><circle cx="17.5" cy="18" r="7"/></clipPath></defs><circle cx="17.5" cy="18" r="7.6" fill="#2d2d2d"/><g clip-path="url(#av2)"><rect x="10" y="11" width="15" height="15" fill="#dddcee"/><path d="M16 24V18.5L16.7 16H18.7L19.3 18.5V24Z" fill="#d9c29a"/><circle cx="16.4" cy="15.2" r="0.9" fill="#222"/><circle cx="18.9" cy="15.2" r="0.9" fill="#222"/><circle cx="17.6" cy="17" r="0.9" fill="#2a2018"/><rect x="10" y="22.5" width="15" height="4" fill="#5cd6c4"/></g></svg>
<svg style="left:799px;top:736px" width="24" height="24" viewBox="0 0 24 24"><rect x="0.5" y="0.5" width="23" height="23" rx="3" fill="#b30b00"/><path d="M5 17.5Q8 16 11 10Q12 6 11.5 4.5Q10.5 4 10.5 7Q11 11 14 14Q17 16 19 15.5Q19.5 14.5 16 14.5Q11 15 6 18.5Q4.5 19.5 5 17.5Z" stroke="#fff" stroke-width="1.3" fill="none" stroke-linejoin="round"/></svg>
<!-- underlines -->
<div class="a" style="left:399px;top:766px;width:40px;height:2px;background:#76b9ed"></div>
<div class="a" style="left:448px;top:766px;width:40px;height:2px;background:#76b9ed"></div>
<div class="a" style="left:595px;top:766px;width:40px;height:2px;background:#76b9ed"></div>
<div class="a" style="left:693px;top:766px;width:40px;height:2px;background:#76b9ed"></div>
<div class="a" style="left:739px;top:766px;width:47px;height:2px;background:#76b9ed"></div>
<div class="a" style="left:791px;top:766px;width:40px;height:2px;background:#76b9ed"></div>
<!-- tray -->
<svg style="left:1116px;top:743px" width="14" height="9"><path d="M1 8L7 1.8L13 8" stroke="#fff" stroke-width="1.3" fill="none"/></svg>
<svg style="left:1141px;top:740px" width="14" height="17" viewBox="0 0 14 17"><path d="M2.5 2.5Q7 0.5 11.5 2.5M2.5 14.5Q7 16.5 11.5 14.5" stroke="#ddd" stroke-width="1" fill="none"/><rect x="1" y="5" width="7.5" height="7" rx="1.5" stroke="#fff" stroke-width="1.1" fill="none"/><path d="M9 7.5L12.5 5.5V11.5L9 9.5" stroke="#fff" stroke-width="1.1" fill="none"/></svg>
<svg style="left:1163px;top:742px" width="17" height="14" viewBox="0 0 17 14"><rect x="3.5" y="0.5" width="13" height="9" stroke="#fff" stroke-width="1" fill="none"/><path d="M10 9.5V12.5M6.5 13H13.5" stroke="#fff" stroke-width="1"/><rect x="0.5" y="2" width="5" height="5" stroke="#fff" stroke-width="1" fill="#121212"/><path d="M3 7V13.5" stroke="#fff" stroke-width="1"/></svg>
<svg style="left:1187px;top:741px" width="17" height="16" viewBox="0 0 17 16"><path d="M0.5 5.5H3.5L7.5 2V14L3.5 10.5H0.5Z" stroke="#fff" stroke-width="1" fill="none"/><path d="M10 5.5Q11.3 8 10 10.5M12.2 3.5Q14.5 8 12.2 12.5M14.4 1.5Q17.5 8 14.4 14.5" stroke="#ccc" stroke-width="1" fill="none"/></svg>
<div class="t" style="left:1215px;top:741.5px;font-size:12px;color:#fff;transform:scaleX(0.78);transform-origin:0 0">ESP</div>
<div class="t" style="left:1262px;top:732.5px;font-size:12px;color:#fff;letter-spacing:-0.6px">14:34</div>
<div class="t" style="left:1249px;top:750.5px;font-size:12px;color:#fff;letter-spacing:-0.1px">21/5/2024</div>
<svg style="left:1319px;top:740px" width="17" height="16" viewBox="0 0 17 16"><path d="M0.5 0.5H16.5V11.5H10.5L8.5 14.5L6.5 11.5H0.5Z" stroke="#fff" stroke-width="1" fill="none"/></svg>
<div class="a" style="left:1355px;top:728px;width:1px;height:40px;background:#555"></div>
</body></html>
